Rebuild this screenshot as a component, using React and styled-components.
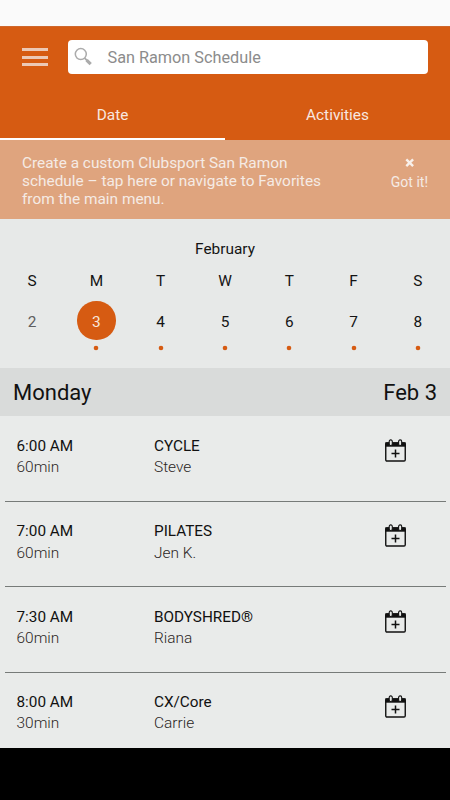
import React from "react";
import styled, { createGlobalStyle } from "styled-components";

const ORANGE = "#d65b12";

const GlobalStyle = createGlobalStyle`
  * { box-sizing: border-box; }
  html, body { margin: 0; padding: 0; background: #000; }
  body { font-family: Roboto, "Liberation Sans", sans-serif; overflow: hidden; }
  button { font: inherit; border: 0; padding: 0; background: none; color: inherit; }
`;

const Screen = styled.div`
  width: 450px;
  height: 800px;
  display: flex;
  flex-direction: column;
  background: #000;
`;

const StatusBar = styled.div`
  flex: none;
  height: 26px;
  background: #fafafa;
`;

const Header = styled.header`
  flex: none;
  height: 114px;
  background: ${ORANGE};
  border-top: 1px solid #cf672c;
  display: flex;
  flex-direction: column;
`;

const SearchRow = styled.div`
  display: flex;
  align-items: center;
  padding: 13px 22px 0;
`;

const MenuButton = styled.button`
  width: 26px;
  height: 18px;
  display: flex;
  flex-direction: column;
  justify-content: space-between;
  margin-right: 20px;
`;

const MenuBar = styled.span`
  width: 100%;
  height: 3px;
  background: #ecc8b5;
`;

const SearchField = styled.div`
  flex: 1;
  height: 34px;
  display: flex;
  align-items: center;
  gap: 13.5px;
  padding-left: 6px;
  background: #fff;
  border-radius: 4px;
  color: #8c8c8c;
  font-size: 16.25px;
`;

const SearchText = styled.span`
  padding-top: 1px;
`;

const Tabs = styled.nav`
  flex: 1;
  display: grid;
  grid-template-columns: 1fr 1fr;
`;

const Tab = styled.button`
  padding-top: 18px;
  border-bottom: 2px solid ${(p) => (p.$active ? "#fff" : "transparent")};
  color: #f8e8e0;
  font-size: 15.4px;
`;

const Notice = styled.section`
  flex: none;
  height: 79px;
  display: flex;
  justify-content: space-between;
  padding: 14px 22px 0;
  background: #dfa47e;
  color: #f5ebe5;
`;

const NoticeText = styled.p`
  margin: 0;
  font-size: 15.4px;
  line-height: 18px;
  white-space: pre-line;
`;

const Dismiss = styled.button`
  display: flex;
  flex-direction: column;
  align-items: center;
  align-self: flex-start;
  padding-top: 4px;
  font-size: 14px;
  line-height: 16px;
  gap: 6px;
`;

const Calendar = styled.section`
  flex: none;
  height: 149px;
  padding-top: 20px;
  background: #e7e9e8;
  color: #141414;
`;

const Month = styled.div`
  font-size: 15.4px;
  line-height: 20px;
  text-align: center;
`;

const Week = styled.div`
  display: grid;
  grid-template-columns: repeat(7, 1fr);
`;

const Day = styled.div`
  display: flex;
  flex-direction: column;
  align-items: center;
  font-size: 15.4px;
`;

const DayName = styled.span`
  margin-top: 12px;
  line-height: 20px;
`;

const DayNumber = styled.span`
  width: 38.4px;
  height: 38.4px;
  margin-top: 10.4px;
  padding-top: 2px;
  border-radius: 50%;
  display: flex;
  align-items: center;
  justify-content: center;
  background: ${(p) => (p.$selected ? ORANGE : "transparent")};
  color: ${(p) => (p.$selected ? "#f8e6dc" : p.$past ? "#5f5f5f" : "#141414")};
`;

const DotMark = styled.svg`
  width: 6px;
  height: 6px;
  margin-top: 4.9px;
`;

const DayHeading = styled.div`
  flex: none;
  height: 48px;
  padding: 1px 13px 0;
  display: flex;
  align-items: center;
  justify-content: space-between;
  background: #d9dbda;
  color: #111;
  font-size: 22px;
`;

const ClassList = styled.ul`
  flex: none;
  height: 332px;
  margin: 0;
  padding: 0.6px 0 0;
  list-style: none;
  overflow: hidden;
  background: #e9ebea;
`;

const ClassRow = styled.li`
  height: 85.33px;
  margin: 0 4.5px 0 4.5px;
  padding: 19.5px 0 0 12px;
  display: grid;
  grid-template-columns: 137.5px 231px 22px;
  border-bottom: 1px solid #777b79;
`;

const Title = styled.div`
  font-size: 15.3px;
  line-height: 21.3px;
  color: #111;
`;

const Detail = styled.div`
  font-size: 15.45px;
  line-height: 21.3px;
  font-weight: 300;
  color: #2b2524;
`;

const AddButton = styled.button`
  width: 22px;
  height: 24px;
  margin-top: 3px;
`;

const Glyph = styled.svg`
  display: block;
  flex: none;
`;

function SearchIcon() {
  return (
    <Glyph width="20" height="20" viewBox="0 0 20 20" fill="none">
      <circle cx="6.8" cy="7.1" r="5.5" stroke="#ababab" strokeWidth="1.5" />
      <path d="M10.7 11.2l2.4 2.5" stroke="#ababab" strokeWidth="1.8" />
      <path d="M12.6 13.2l4.1 4" stroke="#ababab" strokeWidth="3.2" />
    </Glyph>
  );
}

function CloseIcon() {
  return (
    <Glyph width="10" height="10" viewBox="0 0 10 10">
      <path d="M2.3 1.3l6.8 6.8M9.1 1.3L2.3 8.1" stroke="#f8f0eb" strokeWidth="2.4" />
    </Glyph>
  );
}

function Dot() {
  return (
    <DotMark viewBox="0 0 6 6">
      <circle cx="3" cy="3" r="2.3" fill={ORANGE} />
    </DotMark>
  );
}

function CalendarAddIcon() {
  return (
    <Glyph width="22" height="24" viewBox="0 0 22 24" fill="none">
      <rect x="0.75" y="4" width="19.5" height="18" rx="1.2" stroke="#111" strokeWidth="1.4" />
      <path d="M0.3 3.3h20.4v4.4h-20.4z" fill="#111" />
      <rect x="4.2" y="0.9" width="3.1" height="5.6" rx="1.5" fill="#e9ebea" stroke="#111" strokeWidth="1.1" />
      <rect x="13.6" y="0.9" width="3.1" height="5.6" rx="1.5" fill="#e9ebea" stroke="#111" strokeWidth="1.1" />
      <path d="M10.5 10.5v8M6.5 14.5h8" stroke="#111" strokeWidth="1.5" />
    </Glyph>
  );
}

const days = [
  { name: "S", number: 2, past: true },
  { name: "M", number: 3, selected: true },
  { name: "T", number: 4 },
  { name: "W", number: 5 },
  { name: "T", number: 6 },
  { name: "F", number: 7 },
  { name: "S", number: 8 },
];

const classes = [
  { time: "6:00 AM", length: "60min", name: "CYCLE", coach: "Steve" },
  { time: "7:00 AM", length: "60min", name: "PILATES", coach: "Jen K." },
  { time: "7:30 AM", length: "60min", name: "BODYSHRED®", coach: "Riana" },
  { time: "8:00 AM", length: "30min", name: "CX/Core", coach: "Carrie" },
];

export default function App() {
  return (
    <Screen>
      <GlobalStyle />
      <StatusBar />
      <Header>
        <SearchRow>
          <MenuButton aria-label="Menu">
            <MenuBar />
            <MenuBar />
            <MenuBar />
          </MenuButton>
          <SearchField>
            <SearchIcon />
            <SearchText>San Ramon Schedule</SearchText>
          </SearchField>
        </SearchRow>
        <Tabs>
          <Tab $active>Date</Tab>
          <Tab>Activities</Tab>
        </Tabs>
      </Header>
      <Notice>
        <NoticeText>
          {"Create a custom Clubsport San Ramon\nschedule – tap here or navigate to Favorites\nfrom the main menu."}
        </NoticeText>
        <Dismiss>
          <CloseIcon />
          <span>Got it!</span>
        </Dismiss>
      </Notice>
      <Calendar>
        <Month>February</Month>
        <Week>
          {days.map((d) => (
            <Day key={d.number}>
              <DayName>{d.name}</DayName>
              <DayNumber $selected={d.selected} $past={d.past}>{d.number}</DayNumber>
              {!d.past && <Dot />}
            </Day>
          ))}
        </Week>
      </Calendar>
      <DayHeading>
        <span>Monday</span>
        <span>Feb 3</span>
      </DayHeading>
      <ClassList>
        {classes.map((c) => (
          <ClassRow key={c.time}>
            <div>
              <Title>{c.time}</Title>
              <Detail>{c.length}</Detail>
            </div>
            <div>
              <Title>{c.name}</Title>
              <Detail>{c.coach}</Detail>
            </div>
            <AddButton aria-label={`Add ${c.name} to calendar`}>
              <CalendarAddIcon />
            </AddButton>
          </ClassRow>
        ))}
      </ClassList>
    </Screen>
  );
}
